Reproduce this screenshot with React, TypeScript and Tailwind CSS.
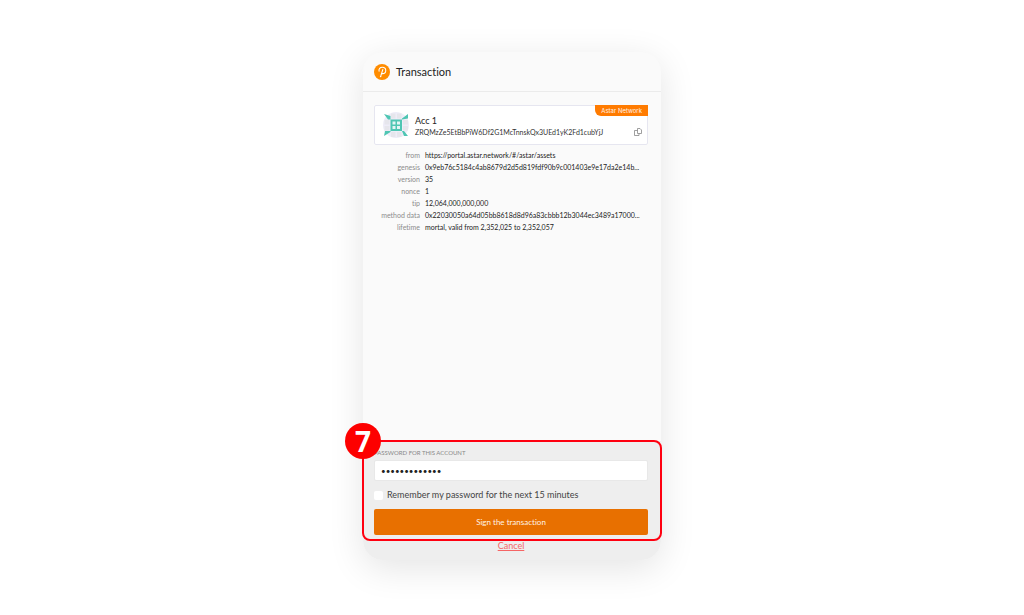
const details = [
  { label: "from", value: "https://portal.astar.network/#/astar/assets" },
  { label: "genesis", value: "0x9eb76c5184c4ab8679d2d5d819fdf90b9c001403e9e17da2e14b..." },
  { label: "version", value: "35" },
  { label: "nonce", value: "1" },
  { label: "tip", value: "12,064,000,000,000" },
  { label: "method data", value: "0x22030050a64d05bb8618d8d96a83cbbb12b3044ec3489a17000..." },
  { label: "lifetime", value: "mortal, valid from 2,352,025 to 2,352,057" },
];

function Logo() {
  return (
    <svg viewBox="0 0 30 30" className="size-4 shrink-0" aria-hidden>
      <circle cx="15" cy="15" r="15" fill="#ff8c00" />
      <path
        d="M9.5 13.5C8.500 9 11.500 6 15.500 6C19.500 6 22 8.700 22 12C22 15.500 19.500 18 16 18H14M16.500 10.500L13 21.500"
        fill="none"
        stroke="#fff"
        strokeWidth="2"
        strokeLinecap="round"
      />
      <circle cx="12.500" cy="23.500" r="1.500" fill="#fff" />
    </svg>
  );
}

function Identicon() {
  return (
    <svg viewBox="0 0 52 52" className="size-[26px] shrink-0" aria-hidden>
      <circle cx="26" cy="26" r="26" fill="#eeedf8" />
      <path
        d="M16 3h9v10h-9zM28 3h9v10h-9zM16 40h9v10h-9zM28 40h9v10h-9zM3 16h10v9H3zM3 28h10v9H3zM40 16h10v9H40zM40 28h10v9H40z"
        fill="#e6e6ec"
      />
      <path d="M2 4L15 8V15H10zM50 4V13L38 15V13zM2 48L4 38L15 38V40zM50 48H42L38 38H42z" fill="#4fc6b3" />
      <rect x="15" y="15" width="23" height="23" fill="#4fc6b3" />
      <path d="M19 19h6v6h-6zM28 19h6v6h-6zM19 28h6v6h-6zM28 28h6v6h-6z" fill="#e4f5f5" />
    </svg>
  );
}

function CopyIcon() {
  return (
    <svg viewBox="0 0 16 16" className="size-2" fill="none" stroke="#808080" strokeWidth="1.500" aria-hidden>
      <path d="M7 1h5l3 3v7H7z" />
      <path d="M7 5H1v10h9v-4" />
    </svg>
  );
}

function AccountCard() {
  return (
    <div className="relative flex h-10 items-center gap-[6px] rounded-xs border border-[#e6e6f0] bg-white pl-2">
      <Identicon />
      <div className="min-w-0 pt-[2px]">
        <div className="text-[9px] leading-3 text-[#222]">Acc 1</div>
        <div className="text-[7px] leading-[10px] whitespace-nowrap text-[#333]">
          ZRQMzZe5EtBbPiW6Df2G1McTnnskQx3UEd1yK2Fd1cubYjJ
        </div>
      </div>
      <span className="absolute -top-px -right-px flex h-[11px] items-center rounded-bl-md bg-[#ff7b00] px-[6px] font-['Inter',sans-serif] text-[6px] leading-none text-[#fff3e6]">
        Astar Network
      </span>
      <button type="button" aria-label="Copy address" className="absolute right-[5px] bottom-[8px]">
        <CopyIcon />
      </button>
    </div>
  );
}

export default function App() {
  return (
    <main className="flex min-h-screen flex-col items-center bg-white pt-[52px] font-['Lato',sans-serif] [font-variant-ligatures:none]">
      <div className="relative w-full max-w-[298px]">
        <section className="flex min-h-[508px] flex-col overflow-hidden rounded-[20px] bg-[#fafafa] shadow-[0_8px_36px_rgba(0,0,0,0.11)]">
          <header className="flex h-10 items-center gap-[6px] border-b border-[#ebebeb] pl-[11px]">
            <Logo />
            <h1 className="text-[11px] leading-4 text-[#222]">Transaction</h1>
          </header>

          <div className="flex-1 pt-[13px] pr-[13px] pl-[11px]">
            <AccountCard />
            <table className="mt-1 text-[7px] leading-3">
              <tbody>
                {details.map((row) => (
                  <tr key={row.label}>
                    <th className="w-[46px] p-0 text-right font-normal whitespace-nowrap text-[#8c8c8c]">{row.label}</th>
                    <td className="p-0 pl-[5px] whitespace-nowrap text-[#222]">{row.value}</td>
                  </tr>
                ))}
              </tbody>
            </table>
          </div>

          <form className="flex flex-col bg-[#eee] pt-2 pr-[13px] pb-[8px] pl-[11px]">
            <label htmlFor="password" className="text-[6px] leading-2 text-[#888] uppercase">
              Password for this account
            </label>
            <input
              id="password"
              type="password"
              defaultValue="astarportal15"
              className="mt-[3px] h-[21px] w-full rounded-xs border border-[#e8e8e8] bg-white px-[6px] text-[8px] text-[#222] outline-none"
            />
            <label className="mt-2 flex h-3 items-center gap-1 text-[9px] leading-3 text-[#444]">
              <input type="checkbox" className="size-[9px] appearance-none rounded-xs bg-white" />
              Remember my password for the next 15 minutes
            </label>
            <button type="button" className="mt-2 h-[26px] rounded-xs bg-[#e87000] text-[8px] text-[#fff3e6]">
              Sign the transaction
            </button>
            <a href="#" className="mt-1 self-center text-[9px] leading-[13px] text-[#f56565] underline">
              Cancel
            </a>
          </form>
        </section>

        {/* Step highlight */}
        <div className="pointer-events-none absolute -inset-x-px bottom-[19px] h-[101px] rounded-lg border-2 border-[#ff0010]">
          <span className="absolute -top-[19px] -left-[19px] flex size-9 items-center justify-center rounded-full bg-[#fd0000] font-['Noto_Sans',sans-serif] text-[28px] leading-none font-bold text-white">
            7
          </span>
        </div>
      </div>
    </main>
  );
}
